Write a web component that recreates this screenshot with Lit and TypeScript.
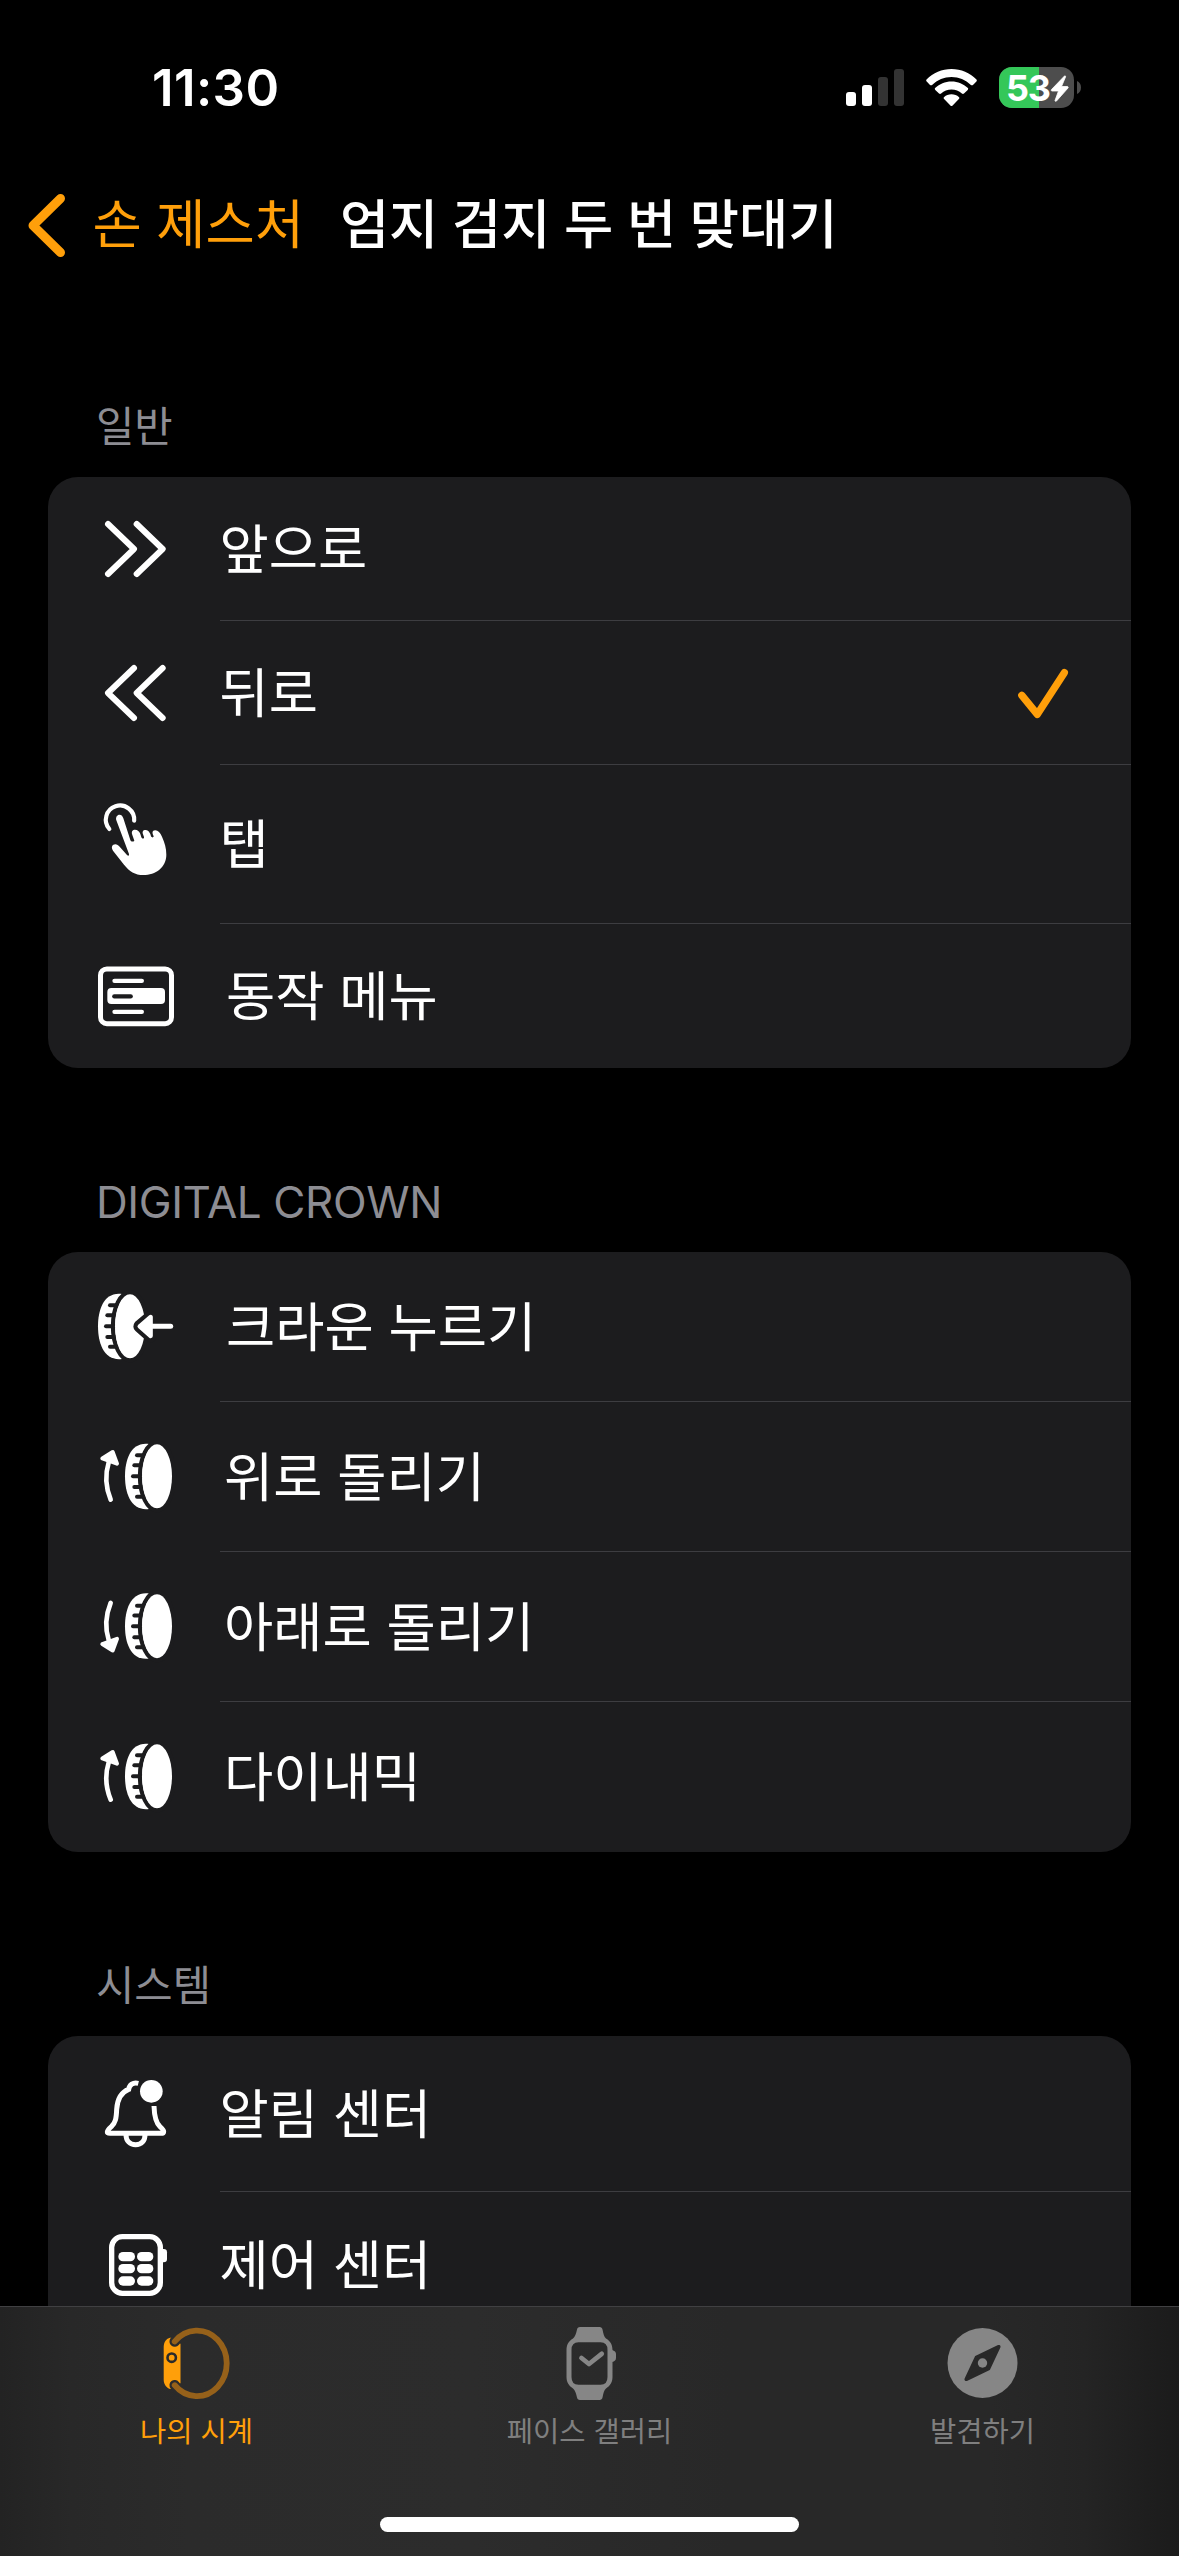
import { LitElement, html, svg, css, nothing, type SVGTemplateResult } from "lit";
import { customElement, property } from "lit/decorators.js";

const CARD = "#1c1c1e";

/* Crown wheel: serrated rim on the left, face ellipse on the right. Centre of the face is (270, 499). */
const crown = svg`
  <path d="M246 402 C192 395 174 448 174 499 C174 550 192 604 246 597 Z" fill="#fff"/>
  <ellipse cx="270" cy="499" rx="51" ry="102" fill="none" stroke="${CARD}" stroke-width="13"/>
  <g stroke="${CARD}" stroke-width="12" stroke-linecap="round">
    <path d="M210 436 H230"/><path d="M202 466 H225"/><path d="M198 499 H225"/>
    <path d="M202 531 H225"/><path d="M210 560 H230"/>
  </g>
  <ellipse cx="270" cy="499" rx="45" ry="96" fill="#fff"/>`;

const turnUp = svg`
  <g transform="translate(81 450)">${crown}</g>
  <path d="M212 1019 Q189 962 206 908" fill="none" stroke="#fff" stroke-width="14" stroke-linecap="round"/>
  <path d="M218 876 L187 895 L231 911 Z" fill="#fff" stroke="#fff" stroke-width="12" stroke-linejoin="round"/>`;

const icons: Record<string, { box: string; art: SVGTemplateResult }> = {
  forward: {
    box: "153 372 270 270",
    art: svg`<path d="M204 432 L282 507 L204 582 M290 432 L368 507 L290 582" fill="none" stroke="#fff" stroke-width="18" stroke-linecap="round" stroke-linejoin="round"/>`,
  },
  backward: {
    box: "153 804 270 270",
    art: svg`<path d="M282 864 L204 939 L282 1014 M368 864 L290 939 L368 1014" fill="none" stroke="#fff" stroke-width="18" stroke-linecap="round" stroke-linejoin="round"/>`,
  },
  tap: {
    box: "153 178 270 270",
    art: svg`
      <path d="M208 265 A42.5 42.5 0 1 1 282.500 240" fill="none" stroke="#fff" stroke-width="12.500" stroke-linecap="round"/>
      <path fill="#fff" d="M229 239 C226 229 232 222 238.500 222 C245 222 248 227 250 233 L271 298 C273 304 280 304 283 300
        L277 283 C273 272 278 267 285 267 C293 267 298 272 301 280 L304 290 C307 296 313 294 312 289 L309 281
        C306 272 310 268 316 268 C323 268 328 273 331 280 L333 287 C335 292 341 291 341 287 L338 280
        C336 272 340 269 346 269 C354 269 361 277 366 288 C374 306 379 322 379 342 C379 380 347 403 310 403
        C285 403 268 392 252 372 L219 330 C212 320 217 311 226 311 C231 311 235 314 239 318 L261 343
        C265 347 268 345 267 340 Z"/>`,
  },
  menu: {
    box: "153 633 270 270",
    art: svg`
      <rect x="181.500" y="687" width="213" height="164" rx="19" fill="none" stroke="#fff" stroke-width="15"/>
      <rect x="202" y="744" width="173" height="48" rx="12" fill="#fff"/>
      <g stroke-width="13" stroke-linecap="round">
        <path d="M223.500 722.500 H305.500 M223.500 815.500 H305.500" stroke="#fff"/>
        <path d="M223 769 H272" stroke="${CARD}"/>
      </g>`,
  },
  press: {
    box: "153 366 270 270",
    art: svg`
      ${crown}
      <path d="M299 499 L332 471 V528 Z" fill="${CARD}" stroke="${CARD}" stroke-width="38" stroke-linejoin="round"/>
      <path d="M299 499 L332 471 V528 Z" fill="#fff" stroke="#fff" stroke-width="13" stroke-linejoin="round"/>
      <path d="M330 499 H392" stroke="#fff" stroke-width="15" stroke-linecap="round"/>`,
  },
  up: { box: "153 816 270 270", art: turnUp },
  down: {
    box: "153 66 270 270",
    art: svg`<g transform="matrix(1 0 0 -1 0 1147.500)">${turnUp}</g>`,
  },
  bell: {
    box: "153 387 270 270",
    art: svg`
      <g fill="none" stroke="#fff" stroke-width="15">
        <path d="M295 430 C279 426 268 434 266 448 C242 457 232 478 230 508 C229 536 226 549 214 560
          C206 567 202 572 202 576 C202 579 205 580 210 580 H362 C368 580 371 578 371 575 C371 571 367 566 360 560
          C348 549 343 530 342 498"/>
        <path d="M258 584 C258 603 270 614 287 614 C304 614 315 603 315 584"/>
      </g>
      <circle cx="334" cy="454" r="34" fill="#fff"/>`,
  },
  control: {
    box: "153 840 270 270",
    art: svg`
      <rect x="215" y="890" width="146" height="170" rx="32" fill="none" stroke="#fff" stroke-width="16"/>
      <path d="M362 927 H371 Q381 927 381 937 V957 Q381 967 371 967 H362 Z" fill="#fff"/>
      ${[936, 972, 1009].map(
        (y) => svg`<rect x="235" y="${y}" width="50" height="28" rx="14" fill="#fff"/>
          <rect x="291" y="${y}" width="49" height="28" rx="14" fill="#fff"/>`
      )}`,
  },
};

interface Item {
  icon: string;
  label: string;
  height: number;
  indent: number;
  checked?: boolean;
}

const groups: { title: string; items: Item[] }[] = [
  {
    title: "일반",
    items: [
      { icon: "forward", label: "앞으로", height: 144, indent: -0.5 },
      { icon: "backward", label: "뒤로", height: 144, indent: -0.5, checked: true },
      { icon: "tap", label: "탭", height: 159, indent: -0.5 },
      { icon: "menu", label: "동작 메뉴", height: 144, indent: 6 },
    ],
  },
  {
    title: "DIGITAL CROWN",
    items: [
      { icon: "press", label: "크라운 누르기", height: 150, indent: 6 },
      { icon: "up", label: "위로 돌리기", height: 150, indent: 4 },
      { icon: "down", label: "아래로 돌리기", height: 150, indent: 4 },
      { icon: "up", label: "다이내믹", height: 150, indent: 4 },
    ],
  },
  {
    title: "시스템",
    items: [
      { icon: "bell", label: "알림 센터", height: 156, indent: -0.5 },
      { icon: "control", label: "제어 센터", height: 146, indent: -0.5 },
    ],
  },
];

@customElement("status-bar")
class StatusBar extends LitElement {
  static styles = css`
    :host {
      display: flex;
      justify-content: space-between;
      align-items: center;
      height: 176px;
      box-sizing: border-box;
      padding: 0 98px 0 152px;
      color: #fff;
      font-family: Inter, "Liberation Sans", sans-serif;
    }
    .time {
      font-size: 51px;
      font-weight: 600;
      letter-spacing: 0.4px;
      line-height: 60px;
    }
    .signs {
      display: block;
    }
    .level {
      font-size: 36px;
      font-weight: 700;
    }
  `;
  render() {
    return html`
      <span class="time">11:30</span>
      <svg class="signs" width="236" height="44" viewBox="845 66 236 44">
        <g fill="#fff">
          <rect x="846" y="92" width="10" height="14" rx="3" />
          <rect x="862" y="85" width="10" height="21" rx="3" />
        </g>
        <g fill="#333">
          <rect x="878" y="77" width="10" height="29" rx="3" />
          <rect x="894" y="69" width="10" height="37" rx="3" />
        </g>
        <g fill="#fff">
          <path d="M951.500 69 C961 69 970 73 976.200 79.200 C977 80 977 80.700 976.400 81.400 L973 84.900 C972.300 85.500 971.600 85.500 970.900 84.900 C965.500 80 959 77 951.500 77 C944 77 937.500 80 932.100 84.900 C931.400 85.500 930.700 85.500 930 84.900 L926.700 81.400 C926 80.700 926 80 926.800 79.200 C933 73 942 69 951.500 69 Z" />
          <path d="M951.500 81.500 C958 81.500 963.500 84 967.600 87.800 C968.400 88.500 968.400 89.200 967.700 90 L964 93.500 C963.300 94.100 962.600 94.100 961.900 93.500 C959 91 955.500 89.500 951.500 89.500 C947.500 89.500 944 91 941.100 93.500 C940.400 94.100 939.700 94.100 939 93.500 L935.300 90 C934.600 89.200 934.600 88.500 935.400 87.800 C939.500 84 945 81.500 951.500 81.500 Z" />
          <path d="M951.500 94.300 C954.300 94.300 957 95.300 958.800 96.900 C959.600 97.600 959.500 98.300 958.900 99 L952.600 105.400 C951.900 106.100 951.100 106.100 950.400 105.400 L944.100 99 C943.500 98.300 943.400 97.600 944.200 96.900 C946 95.300 948.700 94.300 951.500 94.300 Z" />
        </g>
        <rect x="999" y="67" width="75" height="41" rx="13" fill="#4d4d4d" />
        <path d="M1039 67 H1012 A13 13 0 0 0 999 80 V95 A13 13 0 0 0 1012 108 H1039 Z" fill="#34c759" />
        <path d="M1077 81 C1079.500 82 1081 84.500 1081 87.500 C1081 90.500 1079.500 93 1077 94 Z" fill="#4d4d4d" />
        <text class="level" x="1006" y="100.700" textLength="45" fill="#fff">53</text>
        <path d="M1064.500 76 L1051.500 89.500 C1051 90 1051.200 91 1052 91 H1058.500 L1055 100.500 C1055 101.500 1056 101.500 1056.500 101 L1068 88 C1068.500 87 1068 86.500 1067.300 86.500 H1061.500 L1065.500 77 C1065.800 76 1065 75.600 1064.500 76 Z" fill="#fff" stroke="#fff" stroke-width="0.800" stroke-linejoin="round" />
      </svg>
    `;
  }
}

@customElement("option-row")
class OptionRow extends LitElement {
  @property({ attribute: false }) item!: Item;
  @property({ type: Boolean }) last = false;
  static styles = css`
    :host {
      display: block;
    }
    .row {
      display: flex;
      align-items: center;
      padding-left: 43px;
    }
    .icon {
      flex: none;
      width: 90px;
      height: 90px;
      margin-right: 39px;
    }
    .body {
      flex: 1;
      align-self: stretch;
      display: flex;
      align-items: center;
      justify-content: space-between;
      border-bottom: 1px solid #3d3d41;
      padding-right: 60px;
    }
    .body.last {
      border-bottom-color: transparent;
    }
    .label {
      font-size: 53.5px;
      line-height: 70px;
      word-spacing: 2.8px;
      color: #fff;
      padding-bottom: 6px;
      white-space: nowrap;
    }
    .check {
      display: block;
    }
  `;
  render() {
    const { icon, label, height, indent, checked } = this.item;
    return html`
      <div class="row" style="height:${height}px">
        <svg class="icon" viewBox=${icons[icon].box}>${icons[icon].art}</svg>
        <div class="body ${this.last ? "last" : ""}">
          <span class="label" style="margin-left:${indent}px">${label}</span>
          ${checked
            ? html`<svg class="check" width="56" height="56" viewBox="225 615 168 168">
                <path d="M245.500 706 L292 763 L373 638" fill="none" stroke="#ff9f0a" stroke-width="22" stroke-linecap="round" stroke-linejoin="round" />
              </svg>`
            : nothing}
        </div>
      </div>
    `;
  }
}

@customElement("tab-bar")
class TabBar extends LitElement {
  static styles = css`
    :host {
      display: flex;
      flex-direction: column;
      align-items: center;
      flex: none;
      height: 250px;
      box-sizing: border-box;
      border-top: 1px solid #404042;
      background: linear-gradient(90deg, #232323 0, #282828 6%, #2b2b2b 16%, #2c2c2c 40%, #282828 62%, #282828 84%, #242424 92%, #1b1b1b 100%);
    }
    .tabs {
      display: grid;
      grid-template-columns: repeat(3, 1fr);
      width: 100%;
      padding-top: 16px;
      box-sizing: border-box;
      height: 210px;
    }
    .tab {
      display: flex;
      flex-direction: column;
      align-items: center;
      color: #7f7f7f;
      font-size: 28.5px;
      line-height: 40px;
      word-spacing: 1.6px;
    }
    .tab.on {
      color: #ff9f0a;
    }
    .glyph {
      width: 80px;
      height: 80px;
      margin-bottom: 6.5px;
    }
    .home {
      width: 419px;
      height: 15px;
      border-radius: 8px;
      background: #fff;
    }
  `;
  render() {
    return html`
      <div class="tabs">
        <div class="tab on">
          <svg class="glyph" viewBox="156.500 2323 80 80">
            <path d="M169.500 2337.700 H175 L180 2344 V2383 L175 2389 H169.500 C166 2388 163.200 2384 163.200 2380 V2347 C163.200 2342 166 2338.500 169.500 2337.700 Z" fill="#ff9f0a" />
            <g fill="none" stroke-linecap="round">
              <path d="M174.200 2341.500 L178 2337 M174.200 2385.200 L178 2390" stroke="#2b2b2b" stroke-width="10.500" />
              <path d="M174.200 2341.500 A29.800 32.800 0 1 1 174.200 2385.200" stroke="#96611a" stroke-width="5.800" />
            </g>
            <circle cx="171.200" cy="2357.700" r="4.200" fill="#ff9f0a" stroke="#2b2b2b" stroke-width="2.600" />
          </svg>
          <span>나의 시계</span>
        </div>
        <div class="tab">
          <svg class="glyph" viewBox="549.500 2323 80 80">
            <path fill="#868686" fill-rule="evenodd" d="M579.500 2327 H599 C600.800 2327 601.700 2328 602 2329.500 C602.900 2334 603.500 2336.500 605.500 2338.500
              C610 2341 612 2345 612 2350 V2377 C612 2382 610 2385.500 605.500 2388.500 C603.500 2390.500 602.900 2393 602 2397.500
              C601.700 2399 600.800 2400 599 2400 H579.500 C577.700 2400 576.800 2399 576.500 2397.500 C575.600 2393 574.500 2390.500 572.500 2388.500
              C568 2385.500 566 2382 566 2377 V2350 C566 2345 568 2341 572.500 2338.500 C574.500 2336.500 575.600 2334 576.500 2329.500
              C576.800 2328 577.700 2327 579.500 2327 Z
              M578 2342.300 Q571 2342.300 571 2350 V2377 Q571 2384.800 578 2384.800 H600 Q607 2384.800 607 2377 V2350 Q607 2342.300 600 2342.300 Z" />
            <path d="M611.500 2350 Q615.500 2351 615.500 2354 V2358 Q615.500 2361 611.500 2362 Z" fill="#868686" />
            <path d="M581 2358 L588.500 2364 L601.200 2353.800" fill="none" stroke="#868686" stroke-width="4.800" stroke-linecap="round" stroke-linejoin="round" />
          </svg>
          <span>페이스 갤러리</span>
        </div>
        <div class="tab">
          <svg class="glyph" viewBox="942.500 2323 80 80">
            <circle cx="982" cy="2363" r="35" fill="#868686" />
            <path d="M998.300 2346.700 L976 2357.300 L965.700 2379.300 L988 2368.700 Z" fill="#282828" stroke="#282828" stroke-width="3.500" stroke-linejoin="round" />
            <circle cx="982" cy="2363" r="4.700" fill="#868686" />
          </svg>
          <span>발견하기</span>
        </div>
      </div>
      <div class="home"></div>
    `;
  }
}

@customElement("app-root")
class AppRoot extends LitElement {
  static styles = css`
    :host {
      display: flex;
      flex-direction: column;
      width: 1179px;
      height: 2556px;
      overflow: hidden;
      background: #000;
      font-family: "Noto Sans CJK KR", "Noto Sans", sans-serif;
    }
    .nav {
      flex: none;
      display: flex;
      align-items: center;
      height: 98px;
      padding-left: 26px;
      font-size: 53.5px;
      line-height: 70px;
      word-spacing: 2.5px;
      white-space: nowrap;
    }
    .chevron {
      display: block;
      width: 42px;
      height: 66px;
      margin-right: 24.5px;
    }
    .back {
      color: #ff9f0a;
      padding-bottom: 9px;
    }
    .title {
      margin-left: 36px;
      padding-bottom: 9px;
      color: #fff;
      font-weight: 500;
      word-spacing: 1.6px;
    }
    .list {
      flex: 1;
      min-height: 0;
      overflow: hidden;
      padding: 103px 48px 0;
      display: flex;
      flex-direction: column;
      gap: 84px;
    }
    .group {
      flex: none;
    }
    .heading {
      display: flex;
      align-items: center;
      height: 100px;
      box-sizing: border-box;
      padding: 0 48px 7px;
      font-size: 41.7px;
      color: #8d8d93;
    }
    .latin {
      font-family: Inter, "Liberation Sans", sans-serif;
      font-size: 44px;
      letter-spacing: -0.4px;
      padding: 0 48px;
    }
    .card {
      border-radius: 30px;
      background: #1c1c1e;
      overflow: hidden;
    }
  `;
  render() {
    return html`
      <status-bar></status-bar>
      <div class="nav">
        <svg class="chevron" viewBox="26 192 42 66">
          <path d="M60.500 198.500 L33 225.500 L60.500 252.500" fill="none" stroke="#ff9f0a" stroke-width="9" stroke-linecap="round" stroke-linejoin="round" />
        </svg>
        <span class="back">손 제스처</span>
        <span class="title">엄지 검지 두 번 맞대기</span>
      </div>
      <div class="list">
        ${groups.map(
          (g) => html`
            <div class="group">
              <div class="heading ${/^[A-Z ]+$/.test(g.title) ? "latin" : ""}">${g.title}</div>
              <div class="card">
                ${g.items.map((it, i) => html`<option-row .item=${it} ?last=${i === g.items.length - 1}></option-row>`)}
              </div>
            </div>
          `
        )}
      </div>
      <tab-bar></tab-bar>
    `;
  }
}
